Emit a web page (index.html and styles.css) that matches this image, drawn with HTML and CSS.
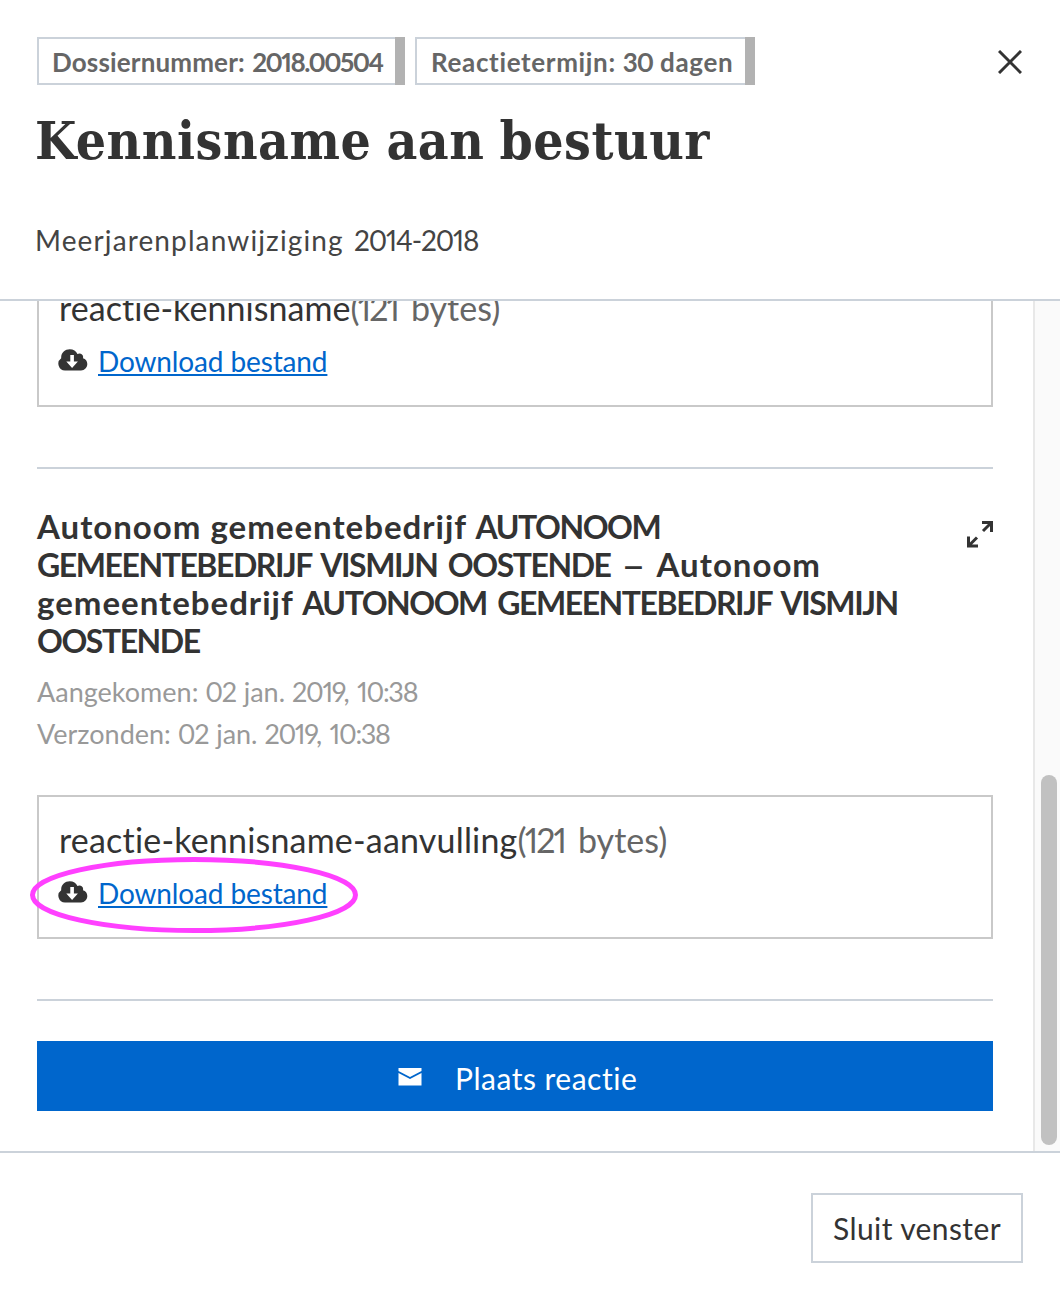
FILE: index.html
```html
<!DOCTYPE html>
<html lang="nl">
<head>
<meta charset="utf-8">
<title>Kennisname aan bestuur</title>
<link rel="stylesheet" href="styles.css">
</head>
<body>
<div class="modal">
  <header class="modal-header">
    <div class="header-top">
      <span class="pill pill-dossier">Dossiernummer: <span class="num">2018.00504</span></span>
      <span class="pill pill-term">Reactietermijn: <span class="num">30</span> dagen</span>
      <button class="close" aria-label="Sluiten">
        <svg width="24" height="24" viewBox="0 0 24 24"><path d="M1 1 23 23M23 1 1 23" fill="none" stroke="#333" stroke-width="3"/></svg>
      </button>
    </div>
    <h1 class="title">Kennisname aan bestuur</h1>
    <p class="subtitle">Meerjarenplanwijziging <span class="num">2014-2018</span></p>
  </header>

  <main class="modal-body">
    <div class="content">
      <section class="file-card file-card-first">
        <p class="file-name"><span>reactie-kennisname</span><span class="file-size"><span class="num">(121</span> bytes)</span></p>
        <p class="download">
          <svg class="cloud" width="30" height="22" viewBox="0 0 30 22"><path fill="#333" d="M7 21.5A6.8 6.8 0 0 1 3.2 9.2C2.8 3.8 7 .3 11.7.3c3.8 0 6.4 1.8 7.7 4.8 2.6-1.7 6.5.3 5.6 4.1 2.6.6 4.3 3 4.3 5.9 0 3.6-2.7 6.4-6.3 6.4z"/><path fill="#fff" d="M12.3 6h3.6v6.5h4l-5.8 6.5-5.8-6.5h4z"/></svg>
          <a href="#" class="link">Download bestand</a>
        </p>
      </section>

      <section class="message">
        <div class="message-head">
          <h2 class="sender">Autonoom gemeentebedrijf <span class="caps">AUTONOOM</span><br><span class="caps">GEMEENTEBEDRIJF VISMIJN OOSTENDE</span> <span class="dash">–</span> Autonoom<br>gemeentebedrijf <span class="caps">AUTONOOM GEMEENTEBEDRIJF VISMIJN</span><br><span class="caps">OOSTENDE</span></h2>
          <svg class="expand" width="26" height="27" viewBox="0 0 26 27"><path fill="none" stroke="#333" stroke-width="3" d="M15 1.500h9.500V11M24 2l-8 8M1.500 15.500V25H11M2 24.500l8-8"/></svg>
        </div>
        <p class="meta meta-arrived">Aangekomen: <span class="num">02</span> jan. <span class="num">2019, 10:38</span></p>
        <p class="meta">Verzonden: <span class="num">02</span> jan. <span class="num">2019, 10:38</span></p>
        <div class="file-card">
          <p class="file-name"><span class="long-name">reactie-kennisname-aanvulling</span><span class="file-size"><span class="num">(121</span> bytes)</span></p>
          <p class="download">
            <svg class="cloud" width="30" height="22" viewBox="0 0 30 22"><path fill="#333" d="M7 21.5A6.8 6.8 0 0 1 3.2 9.2C2.8 3.8 7 .3 11.7.3c3.8 0 6.4 1.8 7.7 4.8 2.6-1.7 6.5.3 5.6 4.1 2.6.6 4.3 3 4.3 5.9 0 3.6-2.7 6.4-6.3 6.4z"/><path fill="#fff" d="M12.3 6h3.6v6.5h4l-5.8 6.5-5.8-6.5h4z"/></svg>
            <a href="#" class="link">Download bestand</a>
          </p>
          <svg class="highlight" width="330" height="78" viewBox="0 0 330 78"><ellipse cx="165" cy="39" rx="161.5" ry="35.5" fill="none" stroke="#ff40ff" stroke-width="5"/></svg>
        </div>
      </section>

      <div class="actions">
        <button class="primary">
          <svg class="mail" width="24" height="18" viewBox="0 0 24 18"><path fill="#fff" d="M.5 0h23v3L12 9 .5 3zM.5 5l11.5 6 11.5-6V17.5H.5z"/></svg>
          <span>Plaats reactie</span>
        </button>
      </div>
    </div>
    <div class="track"><div class="thumb"></div></div>
  </main>

  <footer class="modal-footer">
    <button class="secondary">Sluit venster</button>
  </footer>
</div>
</body>
</html>
```
FILE: styles.css
```css
* { box-sizing: border-box; }
body { margin: 0; background: #fff; color: #333; font-family: Lato, "Open Sans", sans-serif; font-variant-ligatures: none; font-variant-numeric: proportional-nums; }
h1, h2, p { margin: 0; }
button { font-family: inherit; font-variant-ligatures: none; border: 0; background: none; padding: 0; margin: 0; }
svg { display: block; flex: none; }

.modal { width: 1060px; height: 1293px; display: flex; flex-direction: column; overflow: hidden; }

.modal-header { height: 301px; flex: none; padding: 37px 37px 0; border-bottom: 2px solid #cbd2da; white-space: nowrap; }
.header-top { display: flex; gap: 10px; height: 48px; }
.pill { height: 48px; padding-left: 15px; border-right: 10px solid #b2b2b2; box-shadow: inset 0 2px #cbd2da, inset 0 -2px #cbd2da, inset 2px 0 #cbd2da; color: #666; font-size: 26px; font-weight: 700; line-height: 50px; }
.pill-dossier { width: 368px; letter-spacing: 0.15px; }
.pill-dossier .num { letter-spacing: -1.6px; margin-left: 1px; }
.pill-term { width: 340px; padding-left: 16px; letter-spacing: 0.65px; }
.pill-term .num { letter-spacing: -1px; }
.close { margin: 13px 1px 0 auto; width: 24px; height: 24px; }
.title { margin: 17px 0 0 -2px; font-family: "DejaVu Serif Condensed", "DejaVu Serif", serif; font-stretch: condensed; font-size: 53px; font-weight: 700; line-height: 76px; letter-spacing: 0.5px; word-spacing: -2px; }
.subtitle { margin: 43px 0 0 -2px; font-size: 28px; line-height: 38px; color: #444; letter-spacing: 1.12px; }
.subtitle .num { letter-spacing: -1.1px; margin-left: 2px; }

.modal-body { height: 850px; flex: none; display: flex; overflow: hidden; }
.content { width: 1033px; flex: none; padding: 0 40px 0 37px; }
.track { width: 27px; padding: 474px 3px 0 6px; border-left: 2px solid #e8e8e8; background: #fafafa; }
.thumb { width: 16px; height: 370px; border-radius: 8px; background: #c1c1c1; }

.file-card { position: relative; height: 144px; padding: 20px 20px 0 19px; border: 2px solid #c9c9c9; white-space: nowrap; }
.file-card-first { margin-top: -38px; }
.file-name { padding-left: 1px; font-size: 34px; line-height: 46px; letter-spacing: 0.05px; }
.long-name { letter-spacing: 0.19px; }
.file-size { color: #666; word-spacing: 4px; }
.file-size .num { letter-spacing: -1.9px; }
.download { margin-top: 10px; display: flex; align-items: center; gap: 10px; height: 40px; font-size: 28px; line-height: 40px; letter-spacing: -0.13px; }
.cloud { margin-top: -2px; }
.link { color: #0066cc; text-decoration: underline; text-decoration-thickness: 2px; text-underline-offset: 2px; text-decoration-skip-ink: none; }
.highlight { position: absolute; left: -10px; top: 59px; }

.message { margin-top: 60px; border-top: 2px solid #cbd2da; padding-top: 38px; }
.message-head { display: flex; justify-content: space-between; height: 153px; }
.sender { font-size: 33px; font-weight: 700; line-height: 38px; white-space: nowrap; letter-spacing: 1px; }
.caps { font-size: 32px; line-height: 0; letter-spacing: -1.45px; word-spacing: 4px; }
.dash { display: inline-block; transform: scaleX(1.25); margin: 0 5px 0 4px; }
.expand { margin: 14px 0 0; }
.meta { font-size: 27px; line-height: 42px; color: #999; white-space: nowrap; }
.meta .num { letter-spacing: -1.3px; word-spacing: 3px; margin-right: 1px; }
.meta-arrived { margin-top: 11px; }
.message .file-card { margin-top: 40px; }

.actions { margin-top: 60px; border-top: 2px solid #cbd2da; padding-top: 40px; }
.primary { display: flex; align-items: center; gap: 33px; width: 956px; height: 70px; padding: 3px 0 0 361px; background: #0066cc; color: #fff; font-size: 30px; letter-spacing: 0.5px; white-space: nowrap; }
.mail { margin-top: -2px; }

.modal-footer { flex: 1; display: flex; justify-content: flex-end; align-items: flex-start; padding: 40px 37px 0; border-top: 2px solid #cbd2da; }
.secondary { width: 212px; height: 70px; padding-left: 20px; border: 2px solid #cbd2da; color: #333; font-size: 30px; letter-spacing: 0.4px; text-align: left; white-space: nowrap; }
```
